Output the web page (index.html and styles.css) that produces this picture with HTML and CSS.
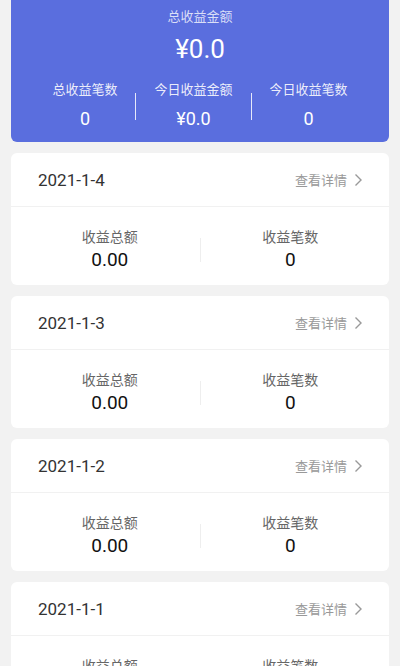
FILE: index.html
```html
<!DOCTYPE html>
<html lang="zh-CN">
    <head>
        <title>收益统计</title>
        <meta charset="UTF-8">
        <link rel="stylesheet" href="styles.css">
    </head>

    <body>
        <div id="main">
            <div class="summary">
                <p class="summary-title">总收益金额</p>
                <p class="summary-amount">¥0.0</p>
                <div class="summary-stats">
                    <div class="stat">
                        <p class="stat-label">总收益笔数</p>
                        <p class="stat-value">0</p>
                    </div>
                    <div class="stat-line"></div>
                    <div class="stat">
                        <p class="stat-label">今日收益金额</p>
                        <p class="stat-value">¥0.0</p>
                    </div>
                    <div class="stat-line"></div>
                    <div class="stat">
                        <p class="stat-label">今日收益笔数</p>
                        <p class="stat-value">0</p>
                    </div>
                </div>
            </div>

            <div class="day">
                <div class="day-head">
                    <span class="day-date">2021-1-4</span>
                    <span class="day-more">查看详情 <svg width="9" height="14" viewBox="0 0 9 14"><polyline points="1.5,1.5 7,7 1.5,12.5" fill="none" stroke="#999" stroke-width="1.4"/></svg></span>
                </div>
                <div class="day-body">
                    <div class="cell"><p class="cell-label">收益总额</p><p class="cell-value">0.00</p></div>
                    <div class="cell-line"></div>
                    <div class="cell"><p class="cell-label">收益笔数</p><p class="cell-value">0</p></div>
                </div>
            </div>

            <div class="day">
                <div class="day-head">
                    <span class="day-date">2021-1-3</span>
                    <span class="day-more">查看详情 <svg width="9" height="14" viewBox="0 0 9 14"><polyline points="1.5,1.5 7,7 1.5,12.5" fill="none" stroke="#999" stroke-width="1.4"/></svg></span>
                </div>
                <div class="day-body">
                    <div class="cell"><p class="cell-label">收益总额</p><p class="cell-value">0.00</p></div>
                    <div class="cell-line"></div>
                    <div class="cell"><p class="cell-label">收益笔数</p><p class="cell-value">0</p></div>
                </div>
            </div>

            <div class="day">
                <div class="day-head">
                    <span class="day-date">2021-1-2</span>
                    <span class="day-more">查看详情 <svg width="9" height="14" viewBox="0 0 9 14"><polyline points="1.5,1.5 7,7 1.5,12.5" fill="none" stroke="#999" stroke-width="1.4"/></svg></span>
                </div>
                <div class="day-body">
                    <div class="cell"><p class="cell-label">收益总额</p><p class="cell-value">0.00</p></div>
                    <div class="cell-line"></div>
                    <div class="cell"><p class="cell-label">收益笔数</p><p class="cell-value">0</p></div>
                </div>
            </div>

            <div class="day">
                <div class="day-head">
                    <span class="day-date">2021-1-1</span>
                    <span class="day-more">查看详情 <svg width="9" height="14" viewBox="0 0 9 14"><polyline points="1.5,1.5 7,7 1.5,12.5" fill="none" stroke="#999" stroke-width="1.4"/></svg></span>
                </div>
                <div class="day-body">
                    <div class="cell"><p class="cell-label">收益总额</p><p class="cell-value">0.00</p></div>
                    <div class="cell-line"></div>
                    <div class="cell"><p class="cell-label">收益笔数</p><p class="cell-value">0</p></div>
                </div>
            </div>
        </div>
    </body>
</html>
```

FILE: styles.css
```css
body{
    margin: 0;
    background-color: #f2f2f2;
    font-family: Roboto, "Noto Sans CJK SC", sans-serif;
}

p{
    margin: 0;
}

#main{
    padding: 0 11px;
}

/* top blue card */
.summary{
    background-color: #5a6ede;
    border-radius: 0 0 6px 6px;
    padding: 8px 0 11px;
    color: #fff;
    text-align: center;
}

.summary-title{
    font-size: 13px;
    line-height: 18px;
    color: rgba(255, 255, 255, 0.78);
}

.summary-amount{
    margin-top: 7px;
    font-size: 26px;
    line-height: 32px;
}

.summary-stats{
    display: flex;
    justify-content: center;
    align-items: center;
    gap: 18px;
    margin-top: 16px;
}

.stat-label{
    font-size: 13px;
    line-height: 18px;
    color: rgba(255, 255, 255, 0.9);
}

.stat-value{
    margin-top: 8px;
    font-size: 18px;
    line-height: 24px;
}

.stat-line{
    width: 1px;
    height: 27px;
    background-color: rgba(255, 255, 255, 0.85);
}

/* day cards */
.day{
    margin-top: 11px;
    background-color: #fff;
    border-radius: 6px;
}

.day-head{
    display: flex;
    justify-content: space-between;
    align-items: center;
    height: 53px;
    padding: 0 26px 0 27px;
    border-bottom: 1px solid #f1f1f1;
}

.day-date{
    font-size: 17px;
    color: #333;
}

.day-more{
    display: flex;
    align-items: center;
    gap: 7px;
    font-size: 13px;
    color: #999;
}

.day-body{
    display: flex;
    align-items: center;
    padding: 20px 9px 13px;
}

.cell{
    flex: 1;
    text-align: center;
}

.cell-label{
    font-size: 14px;
    line-height: 20px;
    color: #666;
}

.cell-value{
    margin-top: 1px;
    font-size: 19px;
    line-height: 24px;
    color: #111;
}

.cell-line{
    width: 1px;
    height: 24px;
    background-color: #eee;
}
```
